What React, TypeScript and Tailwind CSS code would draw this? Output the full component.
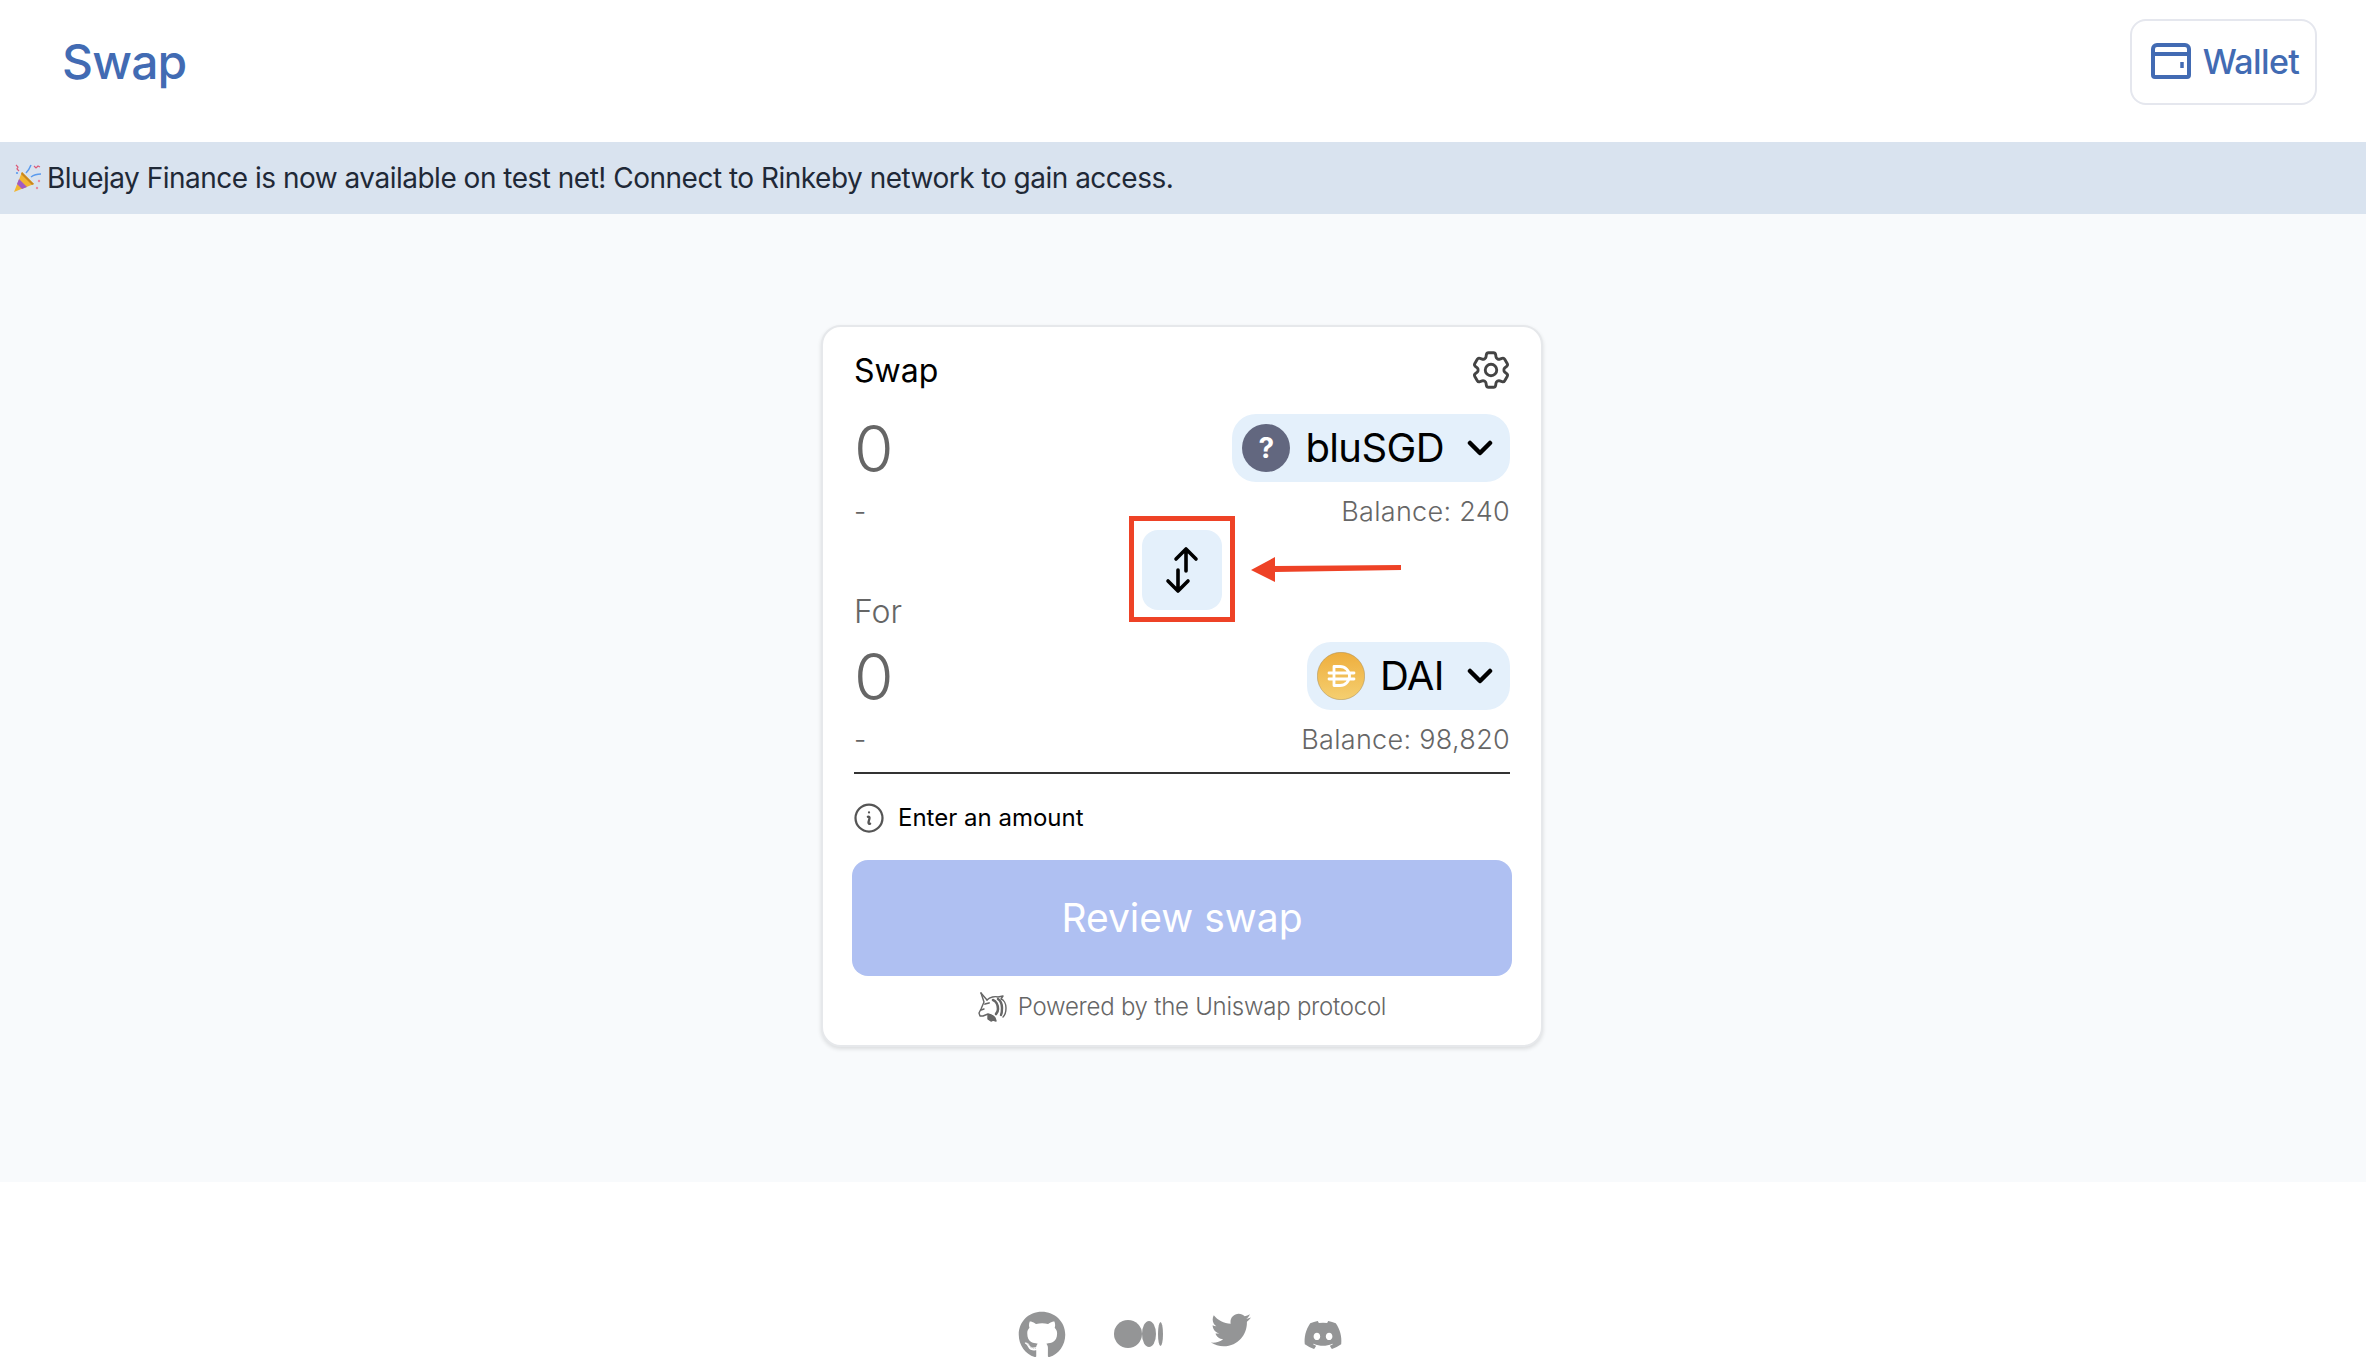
import { FaDiscord, FaGithub, FaTwitter } from 'react-icons/fa';
import { HiOutlineCog6Tooth, HiOutlineInformationCircle } from 'react-icons/hi2';

const WalletIcon = () => (
    <svg className="w-[40px] h-[36px]" viewBox="0 0 40 36" fill="none" stroke="#426bb3" strokeWidth="4" strokeLinejoin="round">
        <path d="M6 2h28a4 4 0 0 1 4 4v26a2 2 0 0 1-2 2H4a2 2 0 0 1-2-2V6a4 4 0 0 1 4-4Z" />
        <path d="M2 11h36" />
        <path d="M31 19v6" strokeWidth="3.5" />
    </svg>
);

const PartyIcon = () => (
    <svg className="w-[29px] h-[28px]" viewBox="0 0 29 28">
        <path d="M9 8 21 20 1 28Z" fill="#f2b632" />
        <path d="M6 15 14 23 9 25 4 20Z" fill="#a15bc4" />
        <path d="M9 8 21 20 19 21 8 10Z" fill="#c8861f" />
        <path d="M13 9q3-3 5-8M18 13q4-3 10-3" fill="none" stroke="#5b9bee" strokeWidth="1.5" />
        <path d="M3 1l2 2-1 2 2 2M21 2l2 2 2-2 2 1" fill="none" stroke="#dc5a78" strokeWidth="1.2" />
        <circle cx="26" cy="17" r="1.2" fill="#e88aa0" />
        <circle cx="24" cy="24" r="1.2" fill="#e88aa0" />
        <circle cx="4" cy="9" r="1.1" fill="#5b9bee" />
    </svg>
);

const UnicornIcon = () => (
    <svg className="w-[30px] h-[30px]" viewBox="0 0 30 30" fill="none" stroke="#666666" strokeWidth="1.4" strokeLinecap="round" strokeLinejoin="round">
        <path d="M3 1l6 7" />
        <path d="M3 1l3 9-3 7-2 4 1 3 3 0 5-2 3 1" />
        <path d="M9 8c3-3 8-4 11-3l5-1-2 3c3 1 5 5 5 9 0 4-1 7-3 9" />
        <path d="M15 8c3 1 5 5 5 9 0 3-1 4-2 5" strokeWidth="2.6" />
        <path d="M20 7c3 2 4 5 4 9 0 3 0 5-1 7" strokeWidth="2.4" />
        <path d="M10 23c3 0 6 1 7 3l1 3-3-1-2 1-3-2Z" fill="#666666" />
        <path d="M7 12l4-1" strokeWidth="1.8" />
        <path d="M3 18l3-1" />
    </svg>
);

const Chevron = () => (
    <svg className="w-[26px] h-[16px]" viewBox="0 0 26 16" fill="none" stroke="black" strokeWidth="4.5" strokeLinecap="round" strokeLinejoin="round">
        <path d="M3 3l10 10L23 3" />
    </svg>
);

const DaiCoin = () => (
    <svg className="w-[48px] h-[48px]" viewBox="0 0 48 48" fill="none">
        <defs>
            <linearGradient id="dai" x1="0" y1="0" x2="0" y2="1">
                <stop offset="0" stopColor="#eeae3d" />
                <stop offset="1" stopColor="#f5cf70" />
            </linearGradient>
        </defs>
        <circle cx="24" cy="24" r="23.7" fill="url(#dai)" stroke="#a88a50" strokeWidth="0.5" />
        <path
            d="M17 14.5v19M17 14.5h6a9.5 9.5 0 0 1 0 19h-6M12 21h25M12 27h25"
            stroke="white"
            strokeWidth="2.8"
            strokeLinecap="round"
        />
    </svg>
);

const MediumIcon = () => (
    <svg className="w-[49px] h-[28px]" viewBox="0 0 49 28" fill="#949596">
        <ellipse cx="14" cy="14" rx="14" ry="14" />
        <ellipse cx="35" cy="14" rx="7" ry="13" />
        <ellipse cx="46.5" cy="14" rx="2.5" ry="12" />
    </svg>
);

const SwapArrows = () => (
    <svg className="w-[40px] h-[60px]" viewBox="0 0 40 60" fill="none" stroke="black" strokeWidth="3.6" strokeLinecap="round" strokeLinejoin="round">
        <path d="M24 31V10M14 19l10-10 10 10" />
        <path d="M16 30v21M6 41l10 10 10-10" />
    </svg>
);

const TokenPill = ({ label, icon }: { label: string; icon: React.ReactNode }) => (
    <div className="h-[68px] flex items-center rounded-[24px] bg-[#e4f0fb] pl-[10px] pr-[17px]">
        {icon}
        <span className="ml-[15px] text-[40px] leading-none tracking-[-0.6px] text-black">{label}</span>
        <span className="ml-[23px]">
            <Chevron />
        </span>
    </div>
);

const TokenRow = ({ label, icon }: { label: string; icon: React.ReactNode }) => (
    <div className="flex items-center justify-between">
        <span className="pt-[2px] text-[64px] leading-none font-light text-[#666666]">0</span>
        <TokenPill label={label} icon={icon} />
    </div>
);

const BalanceRow = ({ balance }: { balance: string }) => (
    <div className="h-[36px] flex items-center justify-between text-[27px] leading-none font-light tracking-[0.3px] text-[#666666]">
        <span>-</span>
        <span>Balance: {balance}</span>
    </div>
);

const App = () => {
    return (
        <div className="min-h-screen flex flex-col bg-white font-['Inter',sans-serif]">
            <header className="h-[142px] flex items-center justify-between pb-[18px] pl-[62px] pr-[49px]">
                <h1 className="text-[48px] leading-none font-medium tracking-[-0.8px] text-[#426bb3]">Swap</h1>
                <button className="h-[86px] w-[187px] flex items-center justify-center gap-[12px] rounded-[16px] border-2 border-[#e5e7ee] bg-white pb-[2px] pl-[3px] text-[34px] font-medium tracking-[-0.6px] text-[#426bb3]">
                    <WalletIcon />
                    Wallet
                </button>
            </header>

            <div className="h-[72px] flex items-center gap-[5px] bg-[#d9e3ef] pl-[13px] text-[28px] tracking-[-0.5px] text-[#1f2937]">
                <PartyIcon />
                <span>Bluejay Finance is now available on test net! Connect to Rinkeby network to gain access.</span>
            </div>

            <main className="h-[968px] bg-[#f8fafc] pt-[111px]">
                <div className="ml-[821px] w-[722px] h-[722px] rounded-[20px] border-2 border-[#e6e8eb] bg-white px-[31px] pt-[24px] shadow-[0_2px_4px_rgba(0,0,0,0.12)]">
                    <div className="h-[38px] flex items-center justify-between">
                        <span className="pt-[2px] text-[32px] leading-none text-black">Swap</span>
                        <HiOutlineCog6Tooth className="w-[46px] h-[46px] -mr-[4px] text-[#444444]" />
                    </div>

                    <div className="mt-[25px]">
                        <TokenRow
                            label="bluSGD"
                            icon={
                                <span className="w-[48px] h-[48px] flex items-center justify-center rounded-full bg-[#62677f] text-[28px] font-bold text-white">
                                    ?
                                </span>
                            }
                        />
                    </div>
                    <div className="mt-[11px]">
                        <BalanceRow balance="240" />
                    </div>

                    <div className="relative mt-[1px] h-[80px] flex justify-center">
                        <button className="w-[80px] h-[80px] flex items-center justify-center rounded-[16px] bg-[#e4f0fb]">
                            <SwapArrows />
                        </button>
                        <div className="absolute left-[275px] -top-[14px] w-[106px] h-[106px] border-[5px] border-[#ee4226]" />
                        <svg className="absolute left-[397px] top-[26px] w-[152px] h-[27px]" viewBox="0 0 152 27" fill="#ee4226">
                            <path d="M0 14 24 1v9l126-1v5L24 16v10Z" />
                        </svg>
                    </div>

                    <div className="-mt-[20px] h-[42px] flex items-center pt-[2px] text-[32px] leading-none font-light text-[#666666]">For</div>

                    <div className="mt-[10px]">
                        <TokenRow label="DAI" icon={<DaiCoin />} />
                    </div>
                    <div className="mt-[11px]">
                        <BalanceRow balance="98,820" />
                    </div>

                    <div className="mt-[15px] h-[2px] bg-[#333333]" />

                    <div className="mt-[29px] h-[30px] flex items-center gap-[14px]">
                        <HiOutlineInformationCircle className="w-[36px] h-[36px] -mx-[3px] text-[#555555]" />
                        <span className="text-[24px] leading-none text-black">Enter an amount</span>
                    </div>

                    <button className="-mx-[2px] mt-[27px] w-[660px] h-[116px] rounded-[16px] bg-[#afc0f2] text-[39px] text-white">Review swap</button>

                    <div className="mt-[15px] h-[32px] flex items-center justify-center gap-[10px] text-[24px] font-light tracking-[-0.25px] text-[#666666]">
                        <UnicornIcon />
                        <span>Powered by the Uniswap protocol</span>
                    </div>
                </div>
            </main>

            <footer className="h-[180px] flex items-start justify-center gap-[48px] pt-[129px] pr-[6px] text-[#949596]">
                <FaGithub className="w-[48px] h-[48px]" />
                <span className="mt-[9px]">
                    <MediumIcon />
                </span>
                <FaTwitter className="w-[40px] h-[40px] -mt-[1px]" />
                <FaDiscord className="w-[40px] h-[32px] mt-[8px] ml-[4px]" />
            </footer>
        </div>
    );
};

export default App;
